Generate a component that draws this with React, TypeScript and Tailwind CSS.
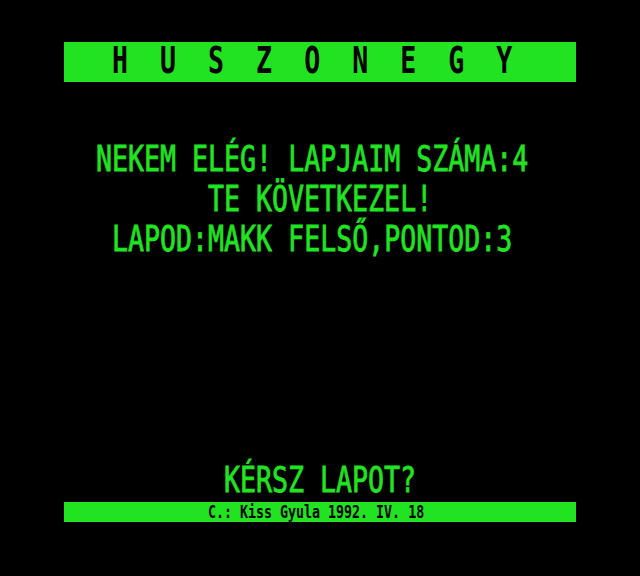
import React from 'react';

const GREEN = 'bg-[#22e322]';

// one row of the 40-column text screen, padded to its starting column (16px each)
const Row: React.FC<{ text: string; pad: string; h?: string }> = ({ text, pad, h = 'h-[40px]' }) => (
  <div className={`flex ${h} ${pad}`}>
    <span className="inline-block origin-top scale-y-[1.34] whitespace-pre leading-none [-webkit-text-stroke:0.6px]">
      {text}
    </span>
  </div>
);

const App: React.FC = () => {
  return (
    <div
      className="w-[640px] h-[576px] bg-black flex flex-col text-[#22e322] text-[26.6px]"
      style={{ fontFamily: '"DejaVu Sans Mono", "Liberation Mono", monospace' }}
    >
      {/* title bar */}
      <div className={`mt-[42px] mx-[64px] h-[40px] ${GREEN} flex pl-[48px] text-black font-bold`}>
        <span className="inline-block origin-top scale-y-[1.42] whitespace-pre leading-none">
          H  U  S  Z  O  N  E  G  Y
        </span>
      </div>

      {/* game messages */}
      <div className="mt-[60px] flex flex-col">
        <Row text="NEKEM ELÉG! LAPJAIM SZÁMA:4" pad="pl-[96px]" />
        <Row text="TE KÖVETKEZEL!" pad="pl-[208px]" />
        <Row text="LAPOD:MAKK FELSŐ,PONTOD:3" pad="pl-[112px]" />
      </div>

      {/* prompt */}
      <div className="mt-[201px]">
        <Row text="KÉRSZ LAPOT?" pad="pl-[224px]" h="h-[39px]" />
      </div>

      {/* credits bar */}
      <div className={`mx-[64px] h-[20px] ${GREEN} flex pl-[144px] pt-[1px] text-black text-[13.3px] font-bold`}>
        <span className="inline-block origin-top scale-y-[1.34] whitespace-pre leading-none">
          C.: Kiss Gyula 1992. IV. 18
        </span>
      </div>
    </div>
  );
};

export default App;
